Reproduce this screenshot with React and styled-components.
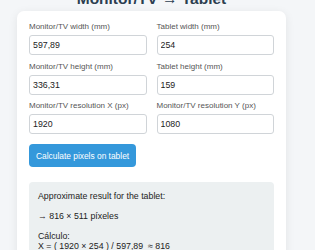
import React from "react";
import styled, { createGlobalStyle } from "styled-components";

const Global = createGlobalStyle`
  html, body { margin: 0; padding: 0; }
  body {
    background: #f4f6f8;
    font-family: "Liberation Sans", Arial, sans-serif;
    color: #222;
    overflow: hidden;
  }
`;

const Page = styled.div`
  width: 269px;
  margin: -10px 0 0 17px;
  font-size: 8.8px;
`;

const Title = styled.h1`
  margin: 0 0 3px;
  font-size: 15.5px;
  line-height: 18px;
  font-weight: 700;
  color: #2c3e50;
  text-align: center;
`;

const Card = styled.div`
  background: #fff;
  border-radius: 7px;
  box-shadow: 0 2px 10px rgba(0, 0, 0, 0.08);
  padding: 11px 12px 12px;
`;

const Grid = styled.div`
  display: grid;
  grid-template-columns: 1fr 1fr;
  column-gap: 10px;
  row-gap: 6.5px;
`;

const Field = styled.div`
  display: flex;
  flex-direction: column;
`;

const Label = styled.label`
  font-size: 8px;
  line-height: 9px;
  color: #555;
  margin-bottom: 4px;
`;

const Input = styled.input`
  box-sizing: border-box;
  height: 20px;
  width: 100%;
  border: 1px solid #d0d4d8;
  border-radius: 3px;
  padding: 0 3px;
  font-family: inherit;
  font-size: 8.8px;
  color: #222;
  background: #fff;
  outline: none;
`;

const Button = styled.button`
  margin-top: 10px;
  height: 23px;
  padding: 0 7px;
  border: none;
  border-radius: 4px;
  background: #3498db;
  color: #fff;
  font-family: inherit;
  font-size: 8.4px;
  cursor: pointer;
`;

const Result = styled.div`
  margin-top: 15px;
  background: #ecf0f1;
  border-radius: 4px;
  padding: 9px 9px;
  line-height: 10px;
  font-size: 8.8px;
  color: #222;
  white-space: pre-wrap;
`;

const fields = [
  ["Monitor/TV width (mm)", "597,89"],
  ["Tablet width (mm)", "254"],
  ["Monitor/TV height (mm)", "336,31"],
  ["Tablet height (mm)", "159"],
  ["Monitor/TV resolution X (px)", "1920"],
  ["Monitor/TV resolution Y (px)", "1080"],
];

export default function App() {
  return (
    <>
      <Global />
      <Page>
        <Title>Monitor/TV → Tablet</Title>
        <Card>
          <Grid>
            {fields.map(([label, value]) => (
              <Field key={label}>
                <Label>{label}</Label>
                <Input defaultValue={value} />
              </Field>
            ))}
          </Grid>
          <Button>Calculate pixels on tablet</Button>
          <Result>
            {"Approximate result for the tablet:\n\n→ 816 × 511 píxeles\n\nCálculo:\nX = ( 1920 × 254 ) / 597,89  ≈ 816\nY = ( 1080 × 159 ) / 336,31  ≈ 511"}
          </Result>
        </Card>
      </Page>
    </>
  );
}
